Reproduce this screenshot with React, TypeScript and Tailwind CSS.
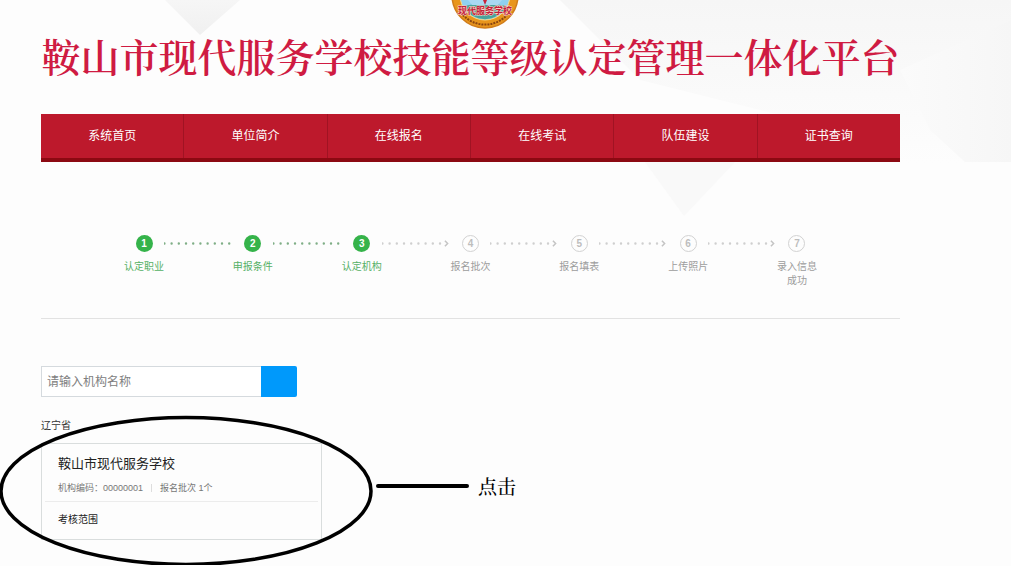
import React, { useState } from 'react';

const NAV_ITEMS = ['系统首页', '单位简介', '在线报名', '在线考试', '队伍建设', '证书查询'];

const STEPS = ['认定职业', '申报条件', '认定机构', '报名批次', '报名填表', '上传照片', '录入信息成功'];

const CURRENT_STEP = 3;

// Pale facets behind the header
function Backdrop() {
  return (
    <svg
      className="absolute top-0 left-0 w-full h-[230px] pointer-events-none"
      viewBox="0 0 1011 230"
      preserveAspectRatio="none"
      aria-hidden="true"
    >
      <defs>
        <linearGradient id="facet" x1="0" y1="0" x2="0" y2="1">
          <stop offset="0" stopColor="#f6f6f6" />
          <stop offset="1" stopColor="#fdfdfd" />
        </linearGradient>
        <linearGradient id="side" x1="0" y1="0" x2="1" y2="0">
          <stop offset="0" stopColor="#fbfbfb" />
          <stop offset="1" stopColor="#f6f6f6" />
        </linearGradient>
        <linearGradient id="notch" x1="0" y1="0" x2="0" y2="1">
          <stop offset="0" stopColor="#f6f6f6" />
          <stop offset="1" stopColor="#f0f0f0" />
        </linearGradient>
      </defs>
      <polygon points="165,0 240,0 200,35" fill="url(#notch)" />
      <polygon points="560,0 1011,0 1011,165 900,165 800,120 640,80" fill="url(#facet)" />
      <polygon points="900,70 1011,20 1011,162 965,162 930,130" fill="url(#side)" />
      <polygon points="645,162 735,162 684,216" fill="#f9f9f9" />
    </svg>
  );
}

function SchoolBadge() {
  return (
    <svg width="70" height="30" viewBox="0 0 70 30" className="block" aria-hidden="true">
      <circle cx="35" cy="-5" r="33" fill="#e8951c" stroke="#d07c1a" strokeWidth="1.5" />
      <circle cx="35" cy="-5" r="25" fill="#8fd0f0" stroke="#f6d98a" strokeWidth="1" />
      <path d="M13 6 Q35 1 57 6 A25 25 0 0 1 13 6Z" fill="#4aa39a" />
      <path d="M18 0h34l-4 5H22z" fill="#a9d8f2" />
      <path d="M33 0h4l-2 5z" fill="#c8243c" />
      <path d="M13 15 A30 30 0 0 0 57 15" fill="none" stroke="#8a4510" strokeWidth="2" strokeDasharray="2 1" />
      <text
        x="35"
        y="14"
        textAnchor="middle"
        fontSize="9"
        fontWeight="700"
        fill="#c41e3a"
        stroke="#f6d3c4"
        strokeWidth="1"
        paintOrder="stroke"
      >
        现代服务学校
      </text>
    </svg>
  );
}

function Connector({ done }: { done: boolean }) {
  return (
    <svg viewBox="0 0 68 17" className="flex-1 min-w-0 h-[17px]" aria-hidden="true">
      <line
        x1="0"
        y1="8.5"
        x2={done ? 66 : 60}
        y2="8.5"
        stroke={done ? '#7fae86' : '#cfcfcf'}
        strokeWidth="2.4"
        strokeLinecap="round"
        strokeDasharray="0 7.2"
      />
      {!done && <path d="M62.5 5.8 L65.2 8.5 L62.5 11.2" fill="none" stroke="#c4c4c4" strokeWidth="1.5" />}
    </svg>
  );
}

function Stepper() {
  return (
    <ol className="flex items-start px-[83px] pt-[73px] pb-[30px]">
      {STEPS.map((label, i) => {
        const done = i < CURRENT_STEP;
        return (
          <React.Fragment key={label}>
            <li className="w-10 shrink-0 flex flex-col items-center gap-2">
              <span
                className={
                  done
                    ? 'w-[17px] h-[17px] rounded-full bg-[#35b34a] text-white text-[10px] leading-[17px] font-bold text-center'
                    : 'w-[17px] h-[17px] rounded-full border border-[#d2d2d2] text-[#bdbdbd] text-[10px] leading-[15px] font-bold text-center'
                }
              >
                {i + 1}
              </span>
              <span
                className={
                  done
                    ? 'text-[10px] leading-[14px] text-center text-[#55b065]'
                    : 'text-[10px] leading-[14px] text-center text-[#9c9c9c]'
                }
              >
                {label}
              </span>
            </li>
            {i < STEPS.length - 1 && <Connector done={i + 1 < CURRENT_STEP} />}
          </React.Fragment>
        );
      })}
    </ol>
  );
}

// Hand-drawn style ring and leader line around the result card
function Annotation() {
  return (
    <div className="absolute -top-[3px] -left-[41px] flex items-center pointer-events-none">
      <svg width="470" height="150" viewBox="0 0 470 150" className="block" aria-hidden="true">
        <ellipse cx="186" cy="76" rx="185" ry="73.5" fill="none" stroke="#000" strokeWidth="3.5" />
        <line x1="378" y1="71" x2="467" y2="71" stroke="#000" strokeWidth="4" strokeLinecap="round" />
      </svg>
      <span className="ml-2 mb-2 font-['Noto_Serif_CJK_SC','Noto_Sans_CJK_SC',serif] font-medium text-[19px] leading-6 text-black whitespace-nowrap">
        点击
      </span>
    </div>
  );
}

export default function App() {
  const [keyword, setKeyword] = useState('');

  return (
    <div className="relative min-h-screen overflow-hidden bg-[#fdfdfd] pl-[41px] pr-[111px] pb-[26px] font-['Liberation_Sans','Noto_Sans_CJK_SC',sans-serif]">
      <Backdrop />
      <div className="relative">
        <header>
          <div className="flex justify-center pl-7">
            <SchoolBadge />
          </div>
          <h1 className="flex justify-center whitespace-nowrap font-['Noto_Serif_CJK_SC','Noto_Sans_CJK_SC',serif] font-semibold text-[39px] leading-[50px] text-[#cf1b42]">
            鞍山市现代服务学校技能等级认定管理一体化平台
          </h1>
        </header>

        <nav className="mt-[34px] flex h-12 bg-[#bd192c] border-b-4 border-[#8c0912]">
          {NAV_ITEMS.map((item) => (
            <a
              key={item}
              href="#"
              className="flex-1 flex items-center justify-center border-r border-[#a01323] last:border-r-0 text-xs text-white"
            >
              {item}
            </a>
          ))}
        </nav>

        <Stepper />

        <hr className="border-t border-[#e2e2e2]" />

        <main>
          <form className="mt-[47px] flex h-[31px] w-64" onSubmit={(e) => e.preventDefault()}>
            <input
              type="text"
              aria-label="机构名称"
              placeholder="请输入机构名称"
              value={keyword}
              onChange={(e) => setKeyword(e.target.value)}
              className="flex-1 min-w-0 border border-r-0 border-[#d5dade] bg-white px-[5px] text-xs text-[#444] placeholder:text-[#808080] outline-none"
            />
            <button type="submit" aria-label="搜索" className="w-9 rounded-r-xs bg-[#0099fb]" />
          </form>

          <section className="relative mt-[21px]">
            <h2 className="text-[10px] leading-4 text-[#333]">辽宁省</h2>
            <article className="mt-[9px] w-[281px] border border-[#d9dddd]">
              <div className="px-4 pt-[10px] pb-[6px]">
                <h3 className="text-[13px] leading-5 text-[#222]">鞍山市现代服务学校</h3>
                <p className="mt-[7px] flex items-center text-[9px] leading-[14px] text-[#777]">
                  <span>机构编码：00000001</span>
                  <span className="mx-2 h-2 w-px bg-[#dddddd]" />
                  <span>报名批次 1个</span>
                </p>
              </div>
              <div className="mx-[3px] border-t border-[#ececec] px-[13px] pt-[10px] pb-[11px] text-[10px] leading-4 text-[#222]">
                考核范围
              </div>
            </article>
            <Annotation />
          </section>
        </main>
      </div>
    </div>
  );
}
